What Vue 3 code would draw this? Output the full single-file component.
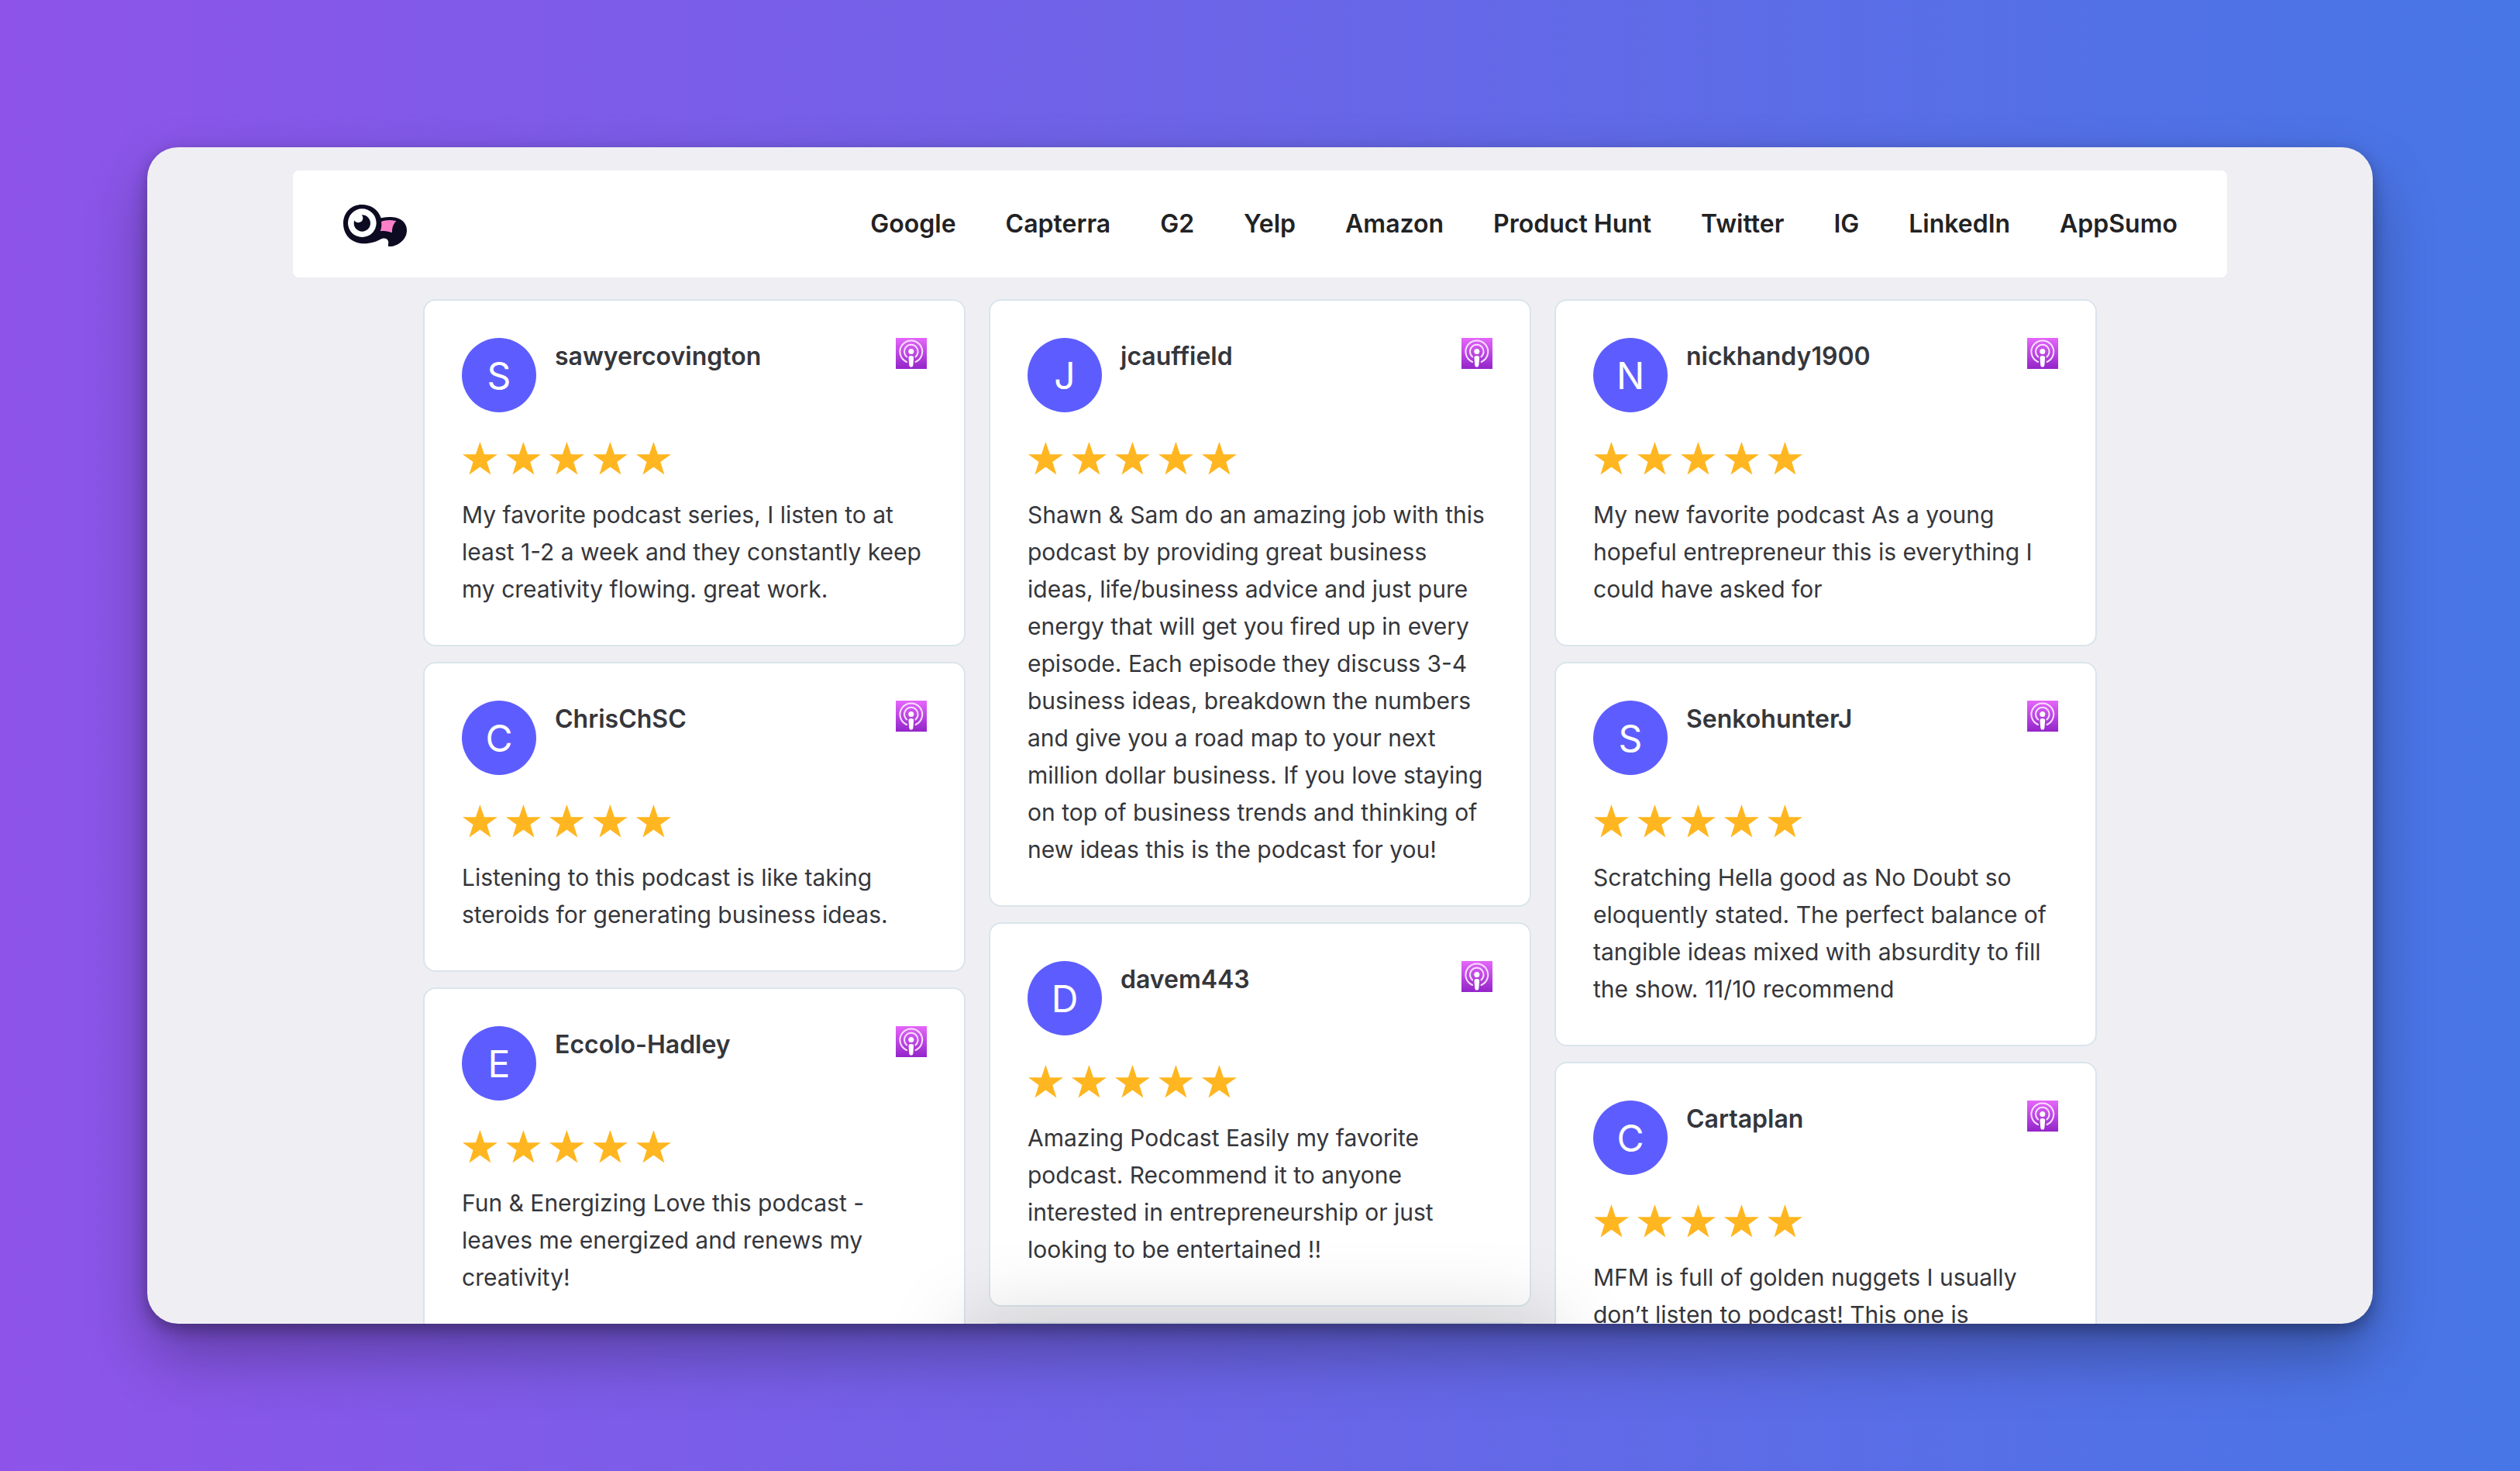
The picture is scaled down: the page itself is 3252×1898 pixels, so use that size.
<script setup>
const links = ['Google', 'Capterra', 'G2', 'Yelp', 'Amazon', 'Product Hunt', 'Twitter', 'IG', 'LinkedIn', 'AppSumo']

const columns = [
  [
    { name: 'sawyercovington', text: 'My favorite podcast series, I listen to at\nleast 1-2 a week and they constantly keep\nmy creativity flowing. great work.' },
    { name: 'ChrisChSC', text: 'Listening to this podcast is like taking\nsteroids for generating business ideas.' },
    { name: 'Eccolo-Hadley', text: 'Fun & Energizing Love this podcast -\nleaves me energized and renews my\ncreativity!' },
  ],
  [
    { name: 'jcauffield', text: 'Shawn & Sam do an amazing job with this\npodcast by providing great business\nideas, life/business advice and just pure\nenergy that will get you fired up in every\nepisode. Each episode they discuss 3-4\nbusiness ideas, breakdown the numbers\nand give you a road map to your next\nmillion dollar business. If you love staying\non top of business trends and thinking of\nnew ideas this is the podcast for you!' },
    { name: 'davem443', text: 'Amazing Podcast Easily my favorite\npodcast. Recommend it to anyone\ninterested in entrepreneurship or just\nlooking to be entertained !!' },
    { name: '', text: '' },
  ],
  [
    { name: 'nickhandy1900', text: 'My new favorite podcast As a young\nhopeful entrepreneur this is everything I\ncould have asked for' },
    { name: 'SenkohunterJ', text: 'Scratching Hella good as No Doubt so\neloquently stated. The perfect balance of\ntangible ideas mixed with absurdity to fill\nthe show. 11/10 recommend' },
    { name: 'Cartaplan', text: 'MFM is full of golden nuggets I usually\ndon’t listen to podcast! This one is' },
  ],
]
</script>

<template>
  <div class="page">
    <main class="window">
      <header class="bar">
        <a class="logo" href="#" aria-label="Home">
          <svg viewBox="846 269 252 174" width="84" height="58" aria-hidden="true">
            <path fill="#0c0b22" d="M995 333C985 300 955 281 921 281C880 281 849 312 849 354C849 400 882 432 930 432C955 432 975 425 990 417C1003 409 1015 410 1021 418C1027 427 1021 434 1023 442C1040 446 1060 436 1070 428C1088 415 1095 398 1095 380C1095 350 1070 329 1032 329C1015 328 1004 331 995 333Z" />
            <circle cx="922" cy="352" r="55" fill="#fff" />
            <circle cx="922" cy="353" r="32" fill="#0c0b22" />
            <circle cx="907" cy="333" r="18" fill="#fff" />
            <path fill="#fb80c8" d="M996 347C1015 340 1035 339 1054 345C1042 356 1037 370 1038 390C1025 384 1008 381 992 384C997 372 998 360 996 347Z" />
          </svg>
        </a>
        <nav class="nav">
          <a v-for="l in links" :key="l" href="#">{{ l }}</a>
        </nav>
      </header>

      <section class="wall">
        <div v-for="(col, i) in columns" :key="i" class="column">
          <article v-for="(r, j) in col" :key="j" class="card">
            <template v-if="r.name">
              <div class="head">
                <span class="avatar">{{ r.name[0].toUpperCase() }}</span>
                <h3 class="name">{{ r.name }}</h3>
                <svg class="source" viewBox="0 0 40 40" width="40" height="40" role="img" aria-label="Apple Podcasts">
                  <defs>
                    <linearGradient :id="`pod-${i}-${j}`" x1="0" y1="0" x2="0" y2="1">
                      <stop offset="0" stop-color="#e566fb" />
                      <stop offset="1" stop-color="#9325c9" />
                    </linearGradient>
                  </defs>
                  <rect width="40" height="40" :fill="`url(#pod-${i}-${j})`" />
                  <g fill="none" stroke="#f8e2ff" stroke-width="2" stroke-linecap="round">
                    <path d="M14 31A14.4 14.4 0 1 1 25.600 31" />
                    <path d="M14.200 24.400A8.800 8.800 0 1 1 25.400 24.400" />
                  </g>
                  <circle cx="19.800" cy="17.600" r="3.500" fill="#fff" />
                  <path fill="#fff" d="M19.800 23c2.400 0 3.400 1 3.300 2.800l-.7 9c-.2 2-1 2.800-2.600 2.800s-2.400-.8-2.600-2.800l-.7-9c-.1-1.800.9-2.800 3.300-2.800z" />
                </svg>
              </div>
              <div class="stars" role="img" aria-label="5 out of 5 stars">
                <svg v-for="s in 5" :key="s" viewBox="0 0 48 48" width="48" height="48">
                  <path fill="#ffb620" d="M23.4 2l5.5 16.2h17l-13.6 9.900 5.100 16.300-14-10-14 10 5.100-16.300L.9 18.200h17z" />
                </svg>
              </div>
              <p class="text">{{ r.text }}</p>
            </template>
          </article>
        </div>
      </section>
      <div class="fade"></div>
    </main>
  </div>
</template>

<style>
body {
  margin: 0;
}
</style>

<style scoped>
.page {
  box-sizing: border-box;
  height: 100vh;
  padding: 190px;
  background: linear-gradient(90deg, #8e54e9, #4776e6);
  font-family: Inter, "Liberation Sans", sans-serif;
  color: #35363b;
}

.window {
  position: relative;
  box-sizing: border-box;
  height: 100%;
  padding: 30px 188px 0;
  overflow: hidden;
  border-radius: 40px;
  background: #efeff3;
  box-shadow: 0 40px 80px rgba(0, 0, 0, 0.3), 0 8px 20px rgba(0, 0, 0, 0.3);
}

.bar {
  display: flex;
  align-items: center;
  justify-content: space-between;
  height: 138px;
  padding: 0 64px;
  border-radius: 8px;
  background: #fff;
}

.logo {
  display: flex;
}

.nav {
  display: flex;
  gap: 64px;
}

.nav a {
  color: #222224;
  font-size: 32px;
  font-weight: 600;
  line-height: 48px;
  text-decoration: none;
  white-space: nowrap;
}

.wall {
  display: grid;
  grid-template-columns: repeat(3, minmax(0, 1fr));
  gap: 30px;
  padding: 28px 168px 0;
}

.column {
  display: flex;
  flex-direction: column;
  gap: 20px;
}

.card {
  padding: 48px;
  border: 2px solid #dae4ec;
  border-radius: 16px;
  background: #fff;
}

.column:nth-child(odd) .card:last-child {
  min-height: 400px;
}

.head {
  display: flex;
  align-items: flex-start;
  gap: 24px;
}

.avatar {
  display: flex;
  align-items: center;
  justify-content: center;
  width: 96px;
  height: 96px;
  border-radius: 50%;
  background: #5d5dff;
  color: #fff;
  font-size: 48px;
}

.name {
  flex: 1;
  margin: 0;
  font-size: 32px;
  font-weight: 600;
  line-height: 48px;
}

.source {
  display: block;
}

.stars {
  display: flex;
  gap: 8px;
  margin: 36px 0 24px;
}

.text {
  margin: 0;
  font-size: 30px;
  line-height: 48px;
  white-space: pre-line;
}

.fade {
  position: absolute;
  top: 100%;
  left: 50%;
  width: 760px;
  height: 100px;
  transform: translateX(-50%);
  box-shadow: 0 0 110px rgba(0, 0, 0, 0.18);
}
</style>
